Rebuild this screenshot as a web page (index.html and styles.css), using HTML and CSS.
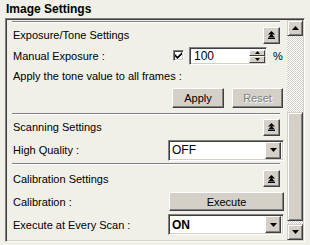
FILE: index.html
```html
<!DOCTYPE html>
<html lang="en">
<head>
    <meta charset="UTF-8">
    <title>Image Settings</title>
    <link rel="stylesheet" href="styles.css">
</head>
<body>
    <div class="title">Image Settings</div>
    <div class="frame">
        <div class="content">
            <!-- Exposure / tone -->
            <div class="sep first"></div>
            <div class="row head h1">
                <span class="label">Exposure/Tone Settings</span>
                <button class="collapse"><svg width="7" height="8" viewBox="0 0 7 8"><path d="M3.5 0L7 3.5H0Z M3.5 3L7 6.5H0Z M0 7H7V8H0Z" fill="#000"/></svg></button>
            </div>
            <div class="row manual">
                <span class="label">Manual Exposure :</span>
                <div class="ctl exp">
                    <span class="check"><svg width="7" height="7" viewBox="0 0 7 7"><path d="M0 2L2.5 4.5L7 0V2.5L2.5 7L0 4.5Z" fill="#000"/></svg></span>
                    <div class="spin">
                        <span class="val">100</span>
                        <div class="spin-btns">
                            <span class="sb"><svg width="5" height="3" viewBox="0 0 5 3"><path d="M2.5 0L5 3H0Z" fill="#000"/></svg></span>
                            <span class="sb"><svg width="5" height="3" viewBox="0 0 5 3"><path d="M0 0H5L2.5 3Z" fill="#000"/></svg></span>
                        </div>
                    </div>
                    <span class="pct">%</span>
                </div>
            </div>
            <div class="row apply-label">
                <span class="label">Apply the tone value to all frames :</span>
            </div>
            <div class="row btns">
                <span class="label"></span>
                <div class="ctl pair">
                    <button class="btn apply">Apply</button>
                    <button class="btn reset" disabled>Reset</button>
                </div>
            </div>

            <!-- Scanning -->
            <div class="sep s2"></div>
            <div class="row head h2">
                <span class="label">Scanning Settings</span>
                <button class="collapse"><svg width="7" height="8" viewBox="0 0 7 8"><path d="M3.5 0L7 3.5H0Z M3.5 3L7 6.5H0Z M0 7H7V8H0Z" fill="#000"/></svg></button>
            </div>
            <div class="row hq">
                <span class="label">High Quality :</span>
                <div class="ctl combo">
                    <span class="val">OFF</span>
                    <span class="drop"><svg width="7" height="4" viewBox="0 0 7 4"><path d="M0 0H7L3.5 4Z" fill="#000"/></svg></span>
                </div>
            </div>

            <!-- Calibration -->
            <div class="sep s3"></div>
            <div class="row head h3">
                <span class="label">Calibration Settings</span>
                <button class="collapse"><svg width="7" height="8" viewBox="0 0 7 8"><path d="M3.5 0L7 3.5H0Z M3.5 3L7 6.5H0Z M0 7H7V8H0Z" fill="#000"/></svg></button>
            </div>
            <div class="row calib">
                <span class="label">Calibration :</span>
                <button class="ctl btn exec">Execute</button>
            </div>
            <div class="row every">
                <span class="label">Execute at Every Scan :</span>
                <div class="ctl combo">
                    <span class="val bold">ON</span>
                    <span class="drop"><svg width="7" height="4" viewBox="0 0 7 4"><path d="M0 0H7L3.5 4Z" fill="#000"/></svg></span>
                </div>
            </div>
        </div>

        <div class="scrollbar">
            <span class="arrow up"><svg width="7" height="4" viewBox="0 0 7 4"><path d="M3.5 0L7 4H0Z" fill="#000"/></svg></span>
            <span class="track t1"></span>
            <span class="thumb"></span>
            <span class="track t2"></span>
            <span class="arrow down"><svg width="7" height="4" viewBox="0 0 7 4"><path d="M0 0H7L3.5 4Z" fill="#000"/></svg></span>
        </div>
    </div>
</body>
</html>
```

FILE: styles.css
```css
body {
    margin: 0;
    background: #f0efe8;
    font-family: "Liberation Sans", Arial, sans-serif;
    font-size: 11px;
    color: #000;
}
.title {
    height: 18px;
    line-height: 18px;
    padding-left: 6px;
    font-weight: bold;
    font-size: 12px;
}
.frame {
    margin-left: 5px;
    width: 300px;
    height: 224px;
    box-sizing: border-box;
    border: 1px solid;
    border-color: #808080 #fff #fff #808080;
    box-shadow: inset 1px 1px #404040, inset -1px -1px #d4d0c8;
    padding: 1px;
    display: flex;
    overflow: hidden;
}
.content {
    width: 280px;
    padding: 0 3px 0 6px;
    box-sizing: border-box;
}
.sep {
    height: 0;
    border-top: 1px solid #808080;
    border-bottom: 1px solid #fff;
    margin: 0 4px 0 -1px;
}
.sep.first { margin-top: 1px; }
.sep.s2 { margin-top: 5px; }
.sep.s3 { margin-top: 1px; }
.row {
    display: flex;
    align-items: center;
}
.label {
    flex: 1;
    white-space: nowrap;
}
.ctl {
    width: 116px;
    box-sizing: border-box;
}
.h1 { height: 24px; }
.h2 { height: 22px; margin-top: 1px; }
.h3 { height: 27px; }
.manual { height: 17px; }
.apply-label { height: 24px; }
.btns { height: 20px; }
.hq { height: 24px; }
.calib { height: 19px; }
.every { height: 27px; }

button {
    font-family: inherit;
    font-size: 11px;
    color: #000;
    padding: 0;
}
.collapse {
    width: 17px;
    height: 17px;
    margin-right: 4px;
    background: #d4d0c8;
    border: 1px solid;
    border-color: #fff #404040 #404040 #fff;
    box-shadow: inset -1px -1px #808080;
    display: flex;
    align-items: center;
    justify-content: center;
}
.btn {
    background: #d4d0c8;
    border: 1px solid;
    border-color: #fff #404040 #404040 #fff;
    box-shadow: inset -1px -1px #808080;
}
.exp {
    display: flex;
    align-items: center;
    padding-left: 5px;
}
.check {
    width: 11px;
    height: 11px;
    box-sizing: border-box;
    border: 1px solid;
    border-color: #808080 #fff #fff #808080;
    box-shadow: inset 1px 1px #404040, inset -1px -1px #d4d0c8;
    background: #fff;
    display: flex;
    align-items: center;
    justify-content: center;
    margin-right: 5px;
}
.spin {
    width: 78px;
    height: 18px;
    box-sizing: border-box;
    border: 1px solid;
    border-color: #808080 #fff #fff #808080;
    box-shadow: inset 1px 1px #404040, inset -1px -1px #d4d0c8;
    background: #fff;
    padding: 2px 1px 1px 2px;
    display: flex;
    font-size: 12px;
}
.spin .val {
    flex: 1;
    padding-left: 2px;
    line-height: 14px;
    margin-top: -1px;
}
.spin-btns {
    width: 16px;
    display: flex;
    flex-direction: column;
}
.sb {
    flex: 1;
    background: #d4d0c8;
    border: 1px solid;
    border-color: #fff #404040 #404040 #fff;
    display: flex;
    align-items: center;
    justify-content: center;
}
.pct {
    margin-left: 6px;
}
.pair {
    display: flex;
    gap: 8px;
    padding-left: 4px;
}
.apply { width: 52px; height: 20px; }
.reset {
    width: 51px;
    height: 20px;
    color: #808080;
    text-shadow: 1px 1px #fff;
}
.exec {
    width: 115px;
    height: 19px;
}
.combo {
    height: 21px;
    border: 1px solid;
    border-color: #808080 #fff #fff #808080;
    box-shadow: inset 1px 1px #404040, inset -1px -1px #d4d0c8;
    background: #fff;
    padding: 2px;
    display: flex;
    align-items: center;
}
.combo .val {
    flex: 1;
    padding-left: 1px;
    font-size: 12px;
}
.combo .bold { font-weight: bold; }
.drop {
    width: 16px;
    height: 17px;
    box-sizing: border-box;
    background: #d4d0c8;
    border: 1px solid;
    border-color: #fff #404040 #404040 #fff;
    box-shadow: inset -1px -1px #808080;
    display: flex;
    align-items: center;
    justify-content: center;
}
.scrollbar {
    width: 16px;
    display: flex;
    flex-direction: column;
}
.arrow, .thumb {
    box-sizing: border-box;
    background: #d4d0c8;
    border: 1px solid;
    border-color: #d4d0c8 #404040 #404040 #d4d0c8;
    box-shadow: inset 1px 1px #fff, inset -1px -1px #808080;
    display: flex;
    align-items: center;
    justify-content: center;
}
.arrow.up { height: 16px; }
.arrow.down { height: 16px; flex-shrink: 0; }
.thumb { height: 111px; }
.track {
    background-image: repeating-conic-gradient(#d4d0c8 0 25%, #fff 0 50%);
    background-size: 2px 2px;
}
.t1 { height: 77px; }
.t2 { height: 3px; }
```
